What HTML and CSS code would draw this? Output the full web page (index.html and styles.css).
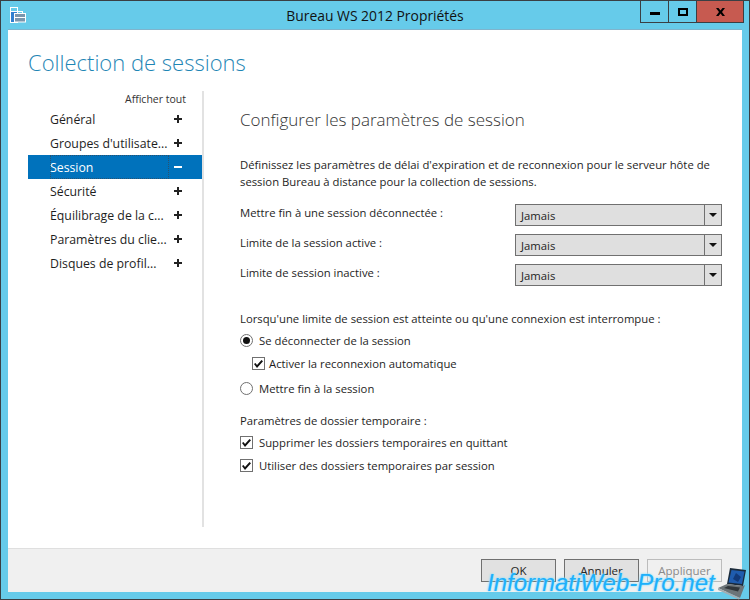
FILE: index.html
```html
<!DOCTYPE html>
<html lang="fr">
<head>
    <meta charset="UTF-8">
    <title>Bureau WS 2012 Propriétés</title>
    <link rel="stylesheet" href="styles.css">
</head>
<body>
    <div class="window">
        <div class="titlebar">
            <svg class="app-icon" width="17" height="17" viewBox="0 0 17 17">
                <rect x="1" y="5" width="6" height="10" fill="#2f7fd0"/>
                <rect x="0.5" y="0.500" width="7" height="15" fill="none" stroke="#fff"/>
                <rect x="1" y="4" width="6" height="1" fill="#fff"/>
                <rect x="4.500" y="6.500" width="11" height="8.500" fill="#7a96ad" stroke="#fff"/>
                <rect x="7.500" y="4.500" width="5" height="2" fill="#66cbea" stroke="#fff"/>
                <rect x="5" y="10" width="10" height="1" fill="#fff"/>
            </svg>
            <div class="title">Bureau WS 2012 Propriétés</div>
            <div class="controls">
                <div class="ctrl"><span class="min"></span></div>
                <div class="ctrl"><span class="max"></span></div>
                <div class="ctrl close">
                    <svg width="9" height="8" viewBox="0 0 9 8"><path d="M0 0h2.500l2 2.500 2-2.500h2.500l-3 4 3 4h-2.500l-2-2.500-2 2.500h-2.500l3-4z" fill="#000"/></svg>
                </div>
            </div>
        </div>

        <div class="client">
            <div class="main">
                <h1>Collection de sessions</h1>
                <div class="columns">
                    <nav class="sidebar">
                        <div class="show-all">Afficher tout</div>
                        <div class="nav-item"><span>Général</span><b class="plus"></b></div>
                        <div class="nav-item"><span>Groupes d'utilisate...</span><b class="plus"></b></div>
                        <div class="nav-item active"><span>Session</span><b class="minus"></b></div>
                        <div class="nav-item"><span>Sécurité</span><b class="plus"></b></div>
                        <div class="nav-item"><span>Équilibrage de la c...</span><b class="plus"></b></div>
                        <div class="nav-item"><span>Paramètres du clie...</span><b class="plus"></b></div>
                        <div class="nav-item"><span>Disques de profil...</span><b class="plus"></b></div>
                    </nav>

                    <section class="panel">
                        <h2>Configurer les paramètres de session</h2>
                        <p class="intro">Définissez les paramètres de délai d'expiration et de reconnexion pour le serveur hôte de session Bureau à distance pour la collection de sessions.</p>

                        <div class="field"><label>Mettre fin à une session déconnectée :</label><div class="combo"><span>Jamais</span><i></i></div></div>
                        <div class="field"><label>Limite de la session active :</label><div class="combo"><span>Jamais</span><i></i></div></div>
                        <div class="field"><label>Limite de session inactive :</label><div class="combo"><span>Jamais</span><i></i></div></div>

                        <p class="line limit">Lorsqu'une limite de session est atteinte ou qu'une connexion est interrompue :</p>
                        <div class="opt opt-first"><span class="radio on"></span>Se déconnecter de la session</div>
                        <div class="opt opt-sub"><span class="check"></span>Activer la reconnexion automatique</div>
                        <div class="opt opt-last"><span class="radio"></span>Mettre fin à la session</div>

                        <p class="line temp">Paramètres de dossier temporaire :</p>
                        <div class="opt opt-t1"><span class="check"></span>Supprimer les dossiers temporaires en quittant</div>
                        <div class="opt opt-t2"><span class="check"></span>Utiliser des dossiers temporaires par session</div>
                    </section>
                </div>
            </div>

            <div class="footer">
                <button>OK</button>
                <button>Annuler</button>
                <button class="disabled">Appliquer</button>
            </div>
        </div>
    </div>

    <div class="watermark">InformatiWeb-Pro.net</div>
    <svg class="laptop" width="47" height="34" viewBox="0 0 47 34">
        <path d="M27 2l16 2-3 16-16-2z" fill="#1a2a3a"/>
        <path d="M28.500 4l13 1.500-2.500 12.500-13.500-1.500z" fill="#1f5cae"/>
        <path d="M33 7l5 4-3 5-5-3z" fill="#123a7a"/>
        <path d="M15 22l9-4 16 2 2-1-5 13z" fill="#6c7478"/>
        <path d="M21 22l4-2 12 1.500-2 4z" fill="#30363a"/>
        <path d="M15 22l22 10-1 1.500-21-9.500z" fill="#a4acb0"/>
    </svg>
</body>
</html>
```

FILE: styles.css
```css
/* General */
html, body {
    margin: 0;
    padding: 0;
}

body {
    width: 750px;
    height: 600px;
    position: relative;
    overflow: hidden;
    font-family: "Open Sans", "Noto Sans", Arial, sans-serif;
    font-size: 11.3px;
    color: #1e1e1e;
}

/* Window frame */
.window {
    box-sizing: border-box;
    width: 750px;
    height: 600px;
    background: #66cbea;
    border: 1px solid #3a3f44;
    display: flex;
    flex-direction: column;
}

.titlebar {
    height: 29px;
    display: flex;
    position: relative;
    flex-shrink: 0;
}

.app-icon {
    margin: 6px 0 0 9px;
}

.title {
    position: absolute;
    left: 0;
    right: 0;
    top: 5px;
    text-align: center;
    font-size: 13.9px;
    color: #111;
}

.controls {
    margin-left: auto;
    margin-right: 5px;
    display: flex;
    height: 21px;
    border: 1px solid #3a3f44;
    border-top: none;
    position: relative;
    z-index: 1;
}

.ctrl {
    width: 27px;
    display: flex;
    align-items: center;
    justify-content: center;
    border-right: 1px solid #3a3f44;
}

.ctrl.close {
    width: 46px;
    background: #c75a50;
    border-right: none;
}

.min {
    width: 10px;
    height: 3px;
    background: #000;
    margin-top: 4px;
}

.max {
    box-sizing: border-box;
    width: 10px;
    height: 8px;
    border: 2px solid #000;
}

.client {
    flex: 1;
    margin: 0 7px 7px;
    background: #fff;
    box-shadow: 0 -1px 0 #7fb4cc;
    display: flex;
    flex-direction: column;
}

.main {
    flex: 1;
    padding-left: 20px;
}

h1 {
    margin: 0;
    padding-top: 17px;
    height: 44px;
    font-size: 22px;
    font-weight: 300;
    line-height: 30px;
    color: #1f86b5;
}

.columns {
    display: flex;
}

/* Left navigation */
.sidebar {
    width: 174px;
    height: 436px;
    position: relative;
    flex-shrink: 0;
}

.show-all {
    height: 16px;
    line-height: 17px;
    text-align: right;
    padding-right: 16px;
    font-size: 10.5px;
    color: #333;
}

.nav-item {
    height: 24px;
    display: flex;
    align-items: center;
    justify-content: space-between;
    padding: 0 20px 0 22px;
    font-size: 12.3px;
}

.nav-item.active {
    background: #0072bc;
    color: #fff;
}

.nav-item.active span {
    align-self: stretch;
    width: 119px;
    display: flex;
    align-items: center;
    outline: 1px dotted #2a5270;
    outline-offset: -1px;
}

.plus, .minus {
    width: 8px;
    height: 8px;
    position: relative;
}

.plus::before, .minus::before {
    content: "";
    position: absolute;
    left: 0;
    top: 3px;
    width: 8px;
    height: 2px;
    background: #222;
}

.minus::before {
    background: #fff;
}

.plus::after {
    content: "";
    position: absolute;
    left: 3px;
    top: 0;
    width: 2px;
    height: 8px;
    background: #222;
}

/* Right panel */
.panel {
    border-left: 2px solid #e2e2e2;
    width: 481px;
    height: 436px;
    padding-left: 36px;
    flex-shrink: 0;
}

h2 {
    margin: 0;
    padding-top: 17px;
    font-size: 17px;
    font-weight: 300;
    line-height: 24px;
    color: #333;
}

.intro {
    margin: 24px 0 0;
    line-height: 17px;
    width: 482px;
}

.field {
    display: flex;
    justify-content: space-between;
    align-items: flex-start;
    height: 30px;
    width: 482px;
}

.field label {
    margin-top: 1px;
}

.intro + .field {
    margin-top: 14px;
}

.combo {
    box-sizing: border-box;
    width: 207px;
    height: 22px;
    background: #dfdfdf;
    border: 1px solid #707070;
    display: flex;
    align-items: center;
    justify-content: space-between;
    padding-left: 5px;
}

.combo i {
    width: 16px;
    height: 20px;
    border-left: 1px solid #707070;
    position: relative;
}

.combo i::after {
    content: "";
    position: absolute;
    left: 4px;
    top: 8px;
    border: 4px solid transparent;
    border-top: 4px solid #111;
    border-bottom: none;
}

.line {
    margin: 0;
}

.limit {
    margin-top: 17px;
}

.temp {
    margin-top: 16px;
}

.opt {
    display: flex;
    align-items: center;
    gap: 6px;
    height: 17px;
}

.opt-first {
    margin-top: 6px;
}

.opt-sub {
    margin-top: 6px;
    padding-left: 12px;
    gap: 4px;
}

.opt-last {
    margin-top: 8px;
}

.opt-t1 {
    margin-top: 6px;
}

.opt-t2 {
    margin-top: 6px;
}

.radio {
    box-sizing: border-box;
    width: 13px;
    height: 13px;
    border: 1px solid #707070;
    border-radius: 50%;
    background: #fff;
    position: relative;
}

.radio.on::after {
    content: "";
    position: absolute;
    left: 2px;
    top: 2px;
    width: 7px;
    height: 7px;
    border-radius: 50%;
    background: #111;
}

.check {
    box-sizing: border-box;
    width: 13px;
    height: 13px;
    border: 1px solid #707070;
    background: #fff;
    position: relative;
}

.check::after {
    content: "";
    position: absolute;
    left: 1px;
    top: 2px;
    width: 9px;
    height: 8px;
    background: #111;
    clip-path: polygon(0 4px, 1.500px 3px, 3px 5px, 7.500px 0, 9px 1.200px, 3px 8px);
}

/* Buttons */
.footer {
    height: 44px;
    background: #f0f0f0;
    border-top: 1px solid #dfdfdf;
    display: flex;
    justify-content: flex-end;
    align-items: flex-start;
    gap: 8px;
    padding: 10px 20px 0 0;
    box-sizing: border-box;
    flex-shrink: 0;
}

button {
    width: 75px;
    height: 23px;
    background: #e1e1e1;
    border: 1px solid #707070;
    font-family: inherit;
    font-size: 11.5px;
    color: #1e1e1e;
    padding: 0;
}

button.disabled {
    background: #f0f0f0;
    border-color: #bcbcbc;
    color: #8a8a8a;
}

/* Watermark */
.watermark {
    position: absolute;
    left: 487px;
    top: 569px;
    font-family: "Liberation Sans", Arial, sans-serif;
    font-style: italic;
    font-size: 24px;
    line-height: 28px;
    color: #1eb0fa;
    text-shadow: 0 0 2px #8fe0ff, 0 0 2px #8fe0ff;
    white-space: nowrap;
}

.laptop {
    position: absolute;
    left: 703px;
    top: 566px;
}
```
